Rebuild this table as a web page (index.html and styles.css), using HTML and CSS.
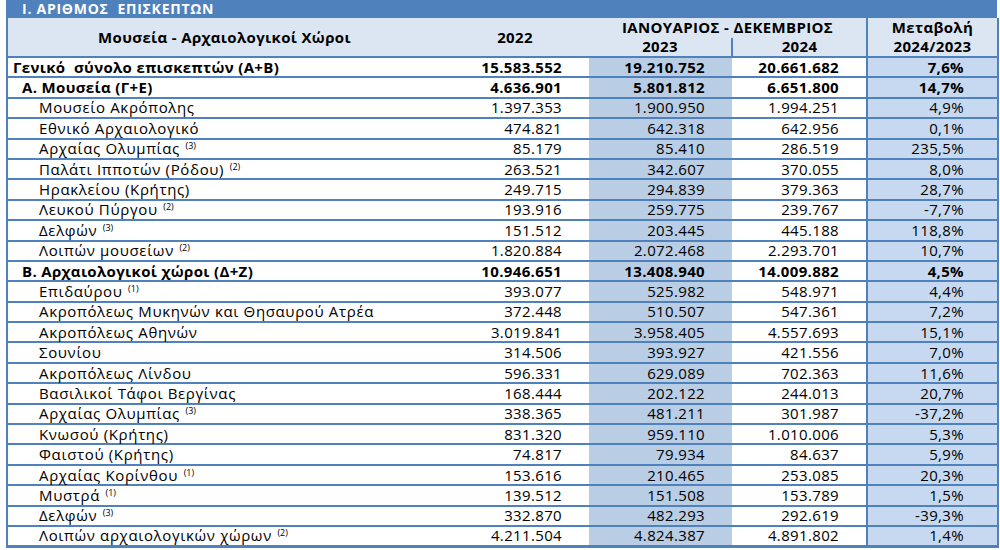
FILE: index.html
```html
<!DOCTYPE html>
<html lang="el">
<head>
<meta charset="utf-8">
<title>Αριθμός επισκεπτών</title>
<link rel="stylesheet" href="styles.css">
</head>
<body>
<div class="sheet">
  <div class="title">Ι. ΑΡΙΘΜΟΣ&nbsp; ΕΠΙΣΚΕΠΤΩΝ</div>
  <table class="stats">
    <colgroup>
      <col class="c-label">
      <col class="c-2022">
      <col class="c-2023">
      <col class="c-2024">
      <col class="c-chg">
    </colgroup>
    <thead>
      <tr class="hr1">
        <th rowspan="2" class="h-label">Μουσεία - Αρχαιολογικοί Χώροι</th>
        <th rowspan="2">2022</th>
        <th colspan="2">ΙΑΝΟΥΑΡΙΟΣ - ΔΕΚΕΜΒΡΙΟΣ</th>
        <th class="h-chg">Μεταβολή</th>
      </tr>
      <tr class="hr2">
        <th>2023</th>
        <th class="h-split">2024</th>
        <th class="h-chg">2024/2023</th>
      </tr>
    </thead>
    <tbody>
      <tr class="total"><td class="lbl">Γενικό&nbsp; σύνολο επισκεπτών (Α+Β)</td><td>15.583.552</td><td class="y23">19.210.752</td><td>20.661.682</td><td class="chg">7,6%</td></tr>
      <tr class="group"><td class="lbl">Α. Μουσεία (Γ+Ε)</td><td>4.636.901</td><td class="y23">5.801.812</td><td>6.651.800</td><td class="chg">14,7%</td></tr>
      <tr class="item"><td class="lbl">Μουσείο Ακρόπολης</td><td>1.397.353</td><td class="y23">1.900.950</td><td>1.994.251</td><td class="chg">4,9%</td></tr>
      <tr class="item"><td class="lbl">Εθνικό Αρχαιολογικό</td><td>474.821</td><td class="y23">642.318</td><td>642.956</td><td class="chg">0,1%</td></tr>
      <tr class="item"><td class="lbl">Αρχαίας Ολυμπίας <sup class="note">(3)</sup></td><td>85.179</td><td class="y23">85.410</td><td>286.519</td><td class="chg">235,5%</td></tr>
      <tr class="item"><td class="lbl">Παλάτι Ιπποτών (Ρόδου) <sup class="note">(2)</sup></td><td>263.521</td><td class="y23">342.607</td><td>370.055</td><td class="chg">8,0%</td></tr>
      <tr class="item"><td class="lbl">Ηρακλείου (Κρήτης)</td><td>249.715</td><td class="y23">294.839</td><td>379.363</td><td class="chg">28,7%</td></tr>
      <tr class="item"><td class="lbl">Λευκού Πύργου <sup class="note">(2)</sup></td><td>193.916</td><td class="y23">259.775</td><td>239.767</td><td class="chg">-7,7%</td></tr>
      <tr class="item"><td class="lbl">Δελφών <sup class="note">(3)</sup></td><td>151.512</td><td class="y23">203.445</td><td>445.188</td><td class="chg">118,8%</td></tr>
      <tr class="item"><td class="lbl">Λοιπών μουσείων <sup class="note">(2)</sup></td><td>1.820.884</td><td class="y23">2.072.468</td><td>2.293.701</td><td class="chg">10,7%</td></tr>
      <tr class="group"><td class="lbl">Β. Αρχαιολογικοί χώροι (Δ+Ζ)</td><td>10.946.651</td><td class="y23">13.408.940</td><td>14.009.882</td><td class="chg">4,5%</td></tr>
      <tr class="item"><td class="lbl">Επιδαύρου <sup class="note">(1)</sup></td><td>393.077</td><td class="y23">525.982</td><td>548.971</td><td class="chg">4,4%</td></tr>
      <tr class="item"><td class="lbl">Ακροπόλεως Μυκηνών και Θησαυρού Ατρέα</td><td>372.448</td><td class="y23">510.507</td><td>547.361</td><td class="chg">7,2%</td></tr>
      <tr class="item"><td class="lbl">Ακροπόλεως Αθηνών</td><td>3.019.841</td><td class="y23">3.958.405</td><td>4.557.693</td><td class="chg">15,1%</td></tr>
      <tr class="item"><td class="lbl">Σουνίου</td><td>314.506</td><td class="y23">393.927</td><td>421.556</td><td class="chg">7,0%</td></tr>
      <tr class="item"><td class="lbl">Ακροπόλεως Λίνδου</td><td>596.331</td><td class="y23">629.089</td><td>702.363</td><td class="chg">11,6%</td></tr>
      <tr class="item"><td class="lbl">Βασιλικοί Τάφοι Βεργίνας</td><td>168.444</td><td class="y23">202.122</td><td>244.013</td><td class="chg">20,7%</td></tr>
      <tr class="item"><td class="lbl">Αρχαίας Ολυμπίας <sup class="note">(3)</sup></td><td>338.365</td><td class="y23">481.211</td><td>301.987</td><td class="chg">-37,2%</td></tr>
      <tr class="item"><td class="lbl">Κνωσού (Κρήτης)</td><td>831.320</td><td class="y23">959.110</td><td>1.010.006</td><td class="chg">5,3%</td></tr>
      <tr class="item"><td class="lbl">Φαιστού (Κρήτης)</td><td>74.817</td><td class="y23">79.934</td><td>84.637</td><td class="chg">5,9%</td></tr>
      <tr class="item"><td class="lbl">Αρχαίας Κορίνθου <sup class="note">(1)</sup></td><td>153.616</td><td class="y23">210.465</td><td>253.085</td><td class="chg">20,3%</td></tr>
      <tr class="item"><td class="lbl">Μυστρά <sup class="note">(1)</sup></td><td>139.512</td><td class="y23">151.508</td><td>153.789</td><td class="chg">1,5%</td></tr>
      <tr class="item"><td class="lbl">Δελφών <sup class="note">(3)</sup></td><td>332.870</td><td class="y23">482.293</td><td>292.619</td><td class="chg">-39,3%</td></tr>
      <tr class="item"><td class="lbl">Λοιπών αρχαιολογικών χώρων <sup class="note">(2)</sup></td><td>4.211.504</td><td class="y23">4.824.387</td><td>4.891.802</td><td class="chg">1,4%</td></tr>
    </tbody>
  </table>
</div>
</body>
</html>
```
FILE: styles.css
```css
html, body {
  margin: 0;
  padding: 0;
  background: #ffffff;
}

body {
  font-family: "Open Sans", "Noto Sans", "DejaVu Sans", sans-serif;
  color: #000000;
}

.sheet {
  margin-left: 6px;
  width: 991px;
}

.title {
  height: 18px;
  line-height: 18px;
  background: #4f81bd;
  color: #ffffff;
  font-weight: 700;
  font-size: 14px;
  letter-spacing: 0.75px;
  padding-left: 16px;
  white-space: nowrap;
}

.stats {
  width: 991px;
  border-collapse: collapse;
  table-layout: fixed;
  font-size: 15px;
  letter-spacing: 0.35px;
  border-left: 2px solid #4f81bd;
  border-right: 2px solid #4f81bd;
  border-bottom: 3px solid #4f81bd;
}

.c-label { width: 434px; }
.c-2022 { width: 148px; }
.c-2023 { width: 143px; }
.c-2024 { width: 135px; }
.c-chg { width: 131px; }

.stats th {
  background: #dce6f2;
  font-weight: 700;
  text-align: center;
  padding: 0;
  white-space: nowrap;
  line-height: 17px;
}

.stats thead tr {
  height: 19.5px;
}

.stats .hr2 th,
.stats thead th[rowspan] {
  border-bottom: 2px solid #4f81bd;
}

.stats .h-split,
.stats .h-chg {
  border-left: 2px solid #4f81bd;
}

.stats tbody tr {
  height: 20.4px;
}

.stats td {
  padding: 0 27px 0 0;
  text-align: right;
  white-space: nowrap;
  border-bottom: 2px solid #4f81bd;
  line-height: 17px;
}

.stats td.lbl {
  text-align: left;
  padding: 0 0 0 31px;
}

.stats .item td.lbl {
  letter-spacing: 0.65px;
}

.stats .total td.lbl { padding-left: 5px; }
.stats .group td.lbl { padding-left: 14px; }

.stats .total td,
.stats .group td {
  font-weight: 700;
}

.stats td.y23 {
  background: #b9cde5;
}

.stats td.chg {
  background: #c6d9f1;
  border-left: 2px solid #4f81bd;
  padding-right: 33px;
}

.note {
  font-size: 9px;
  letter-spacing: 0;
  vertical-align: 5px;
  line-height: 0;
  margin-left: 1px;
}
```
